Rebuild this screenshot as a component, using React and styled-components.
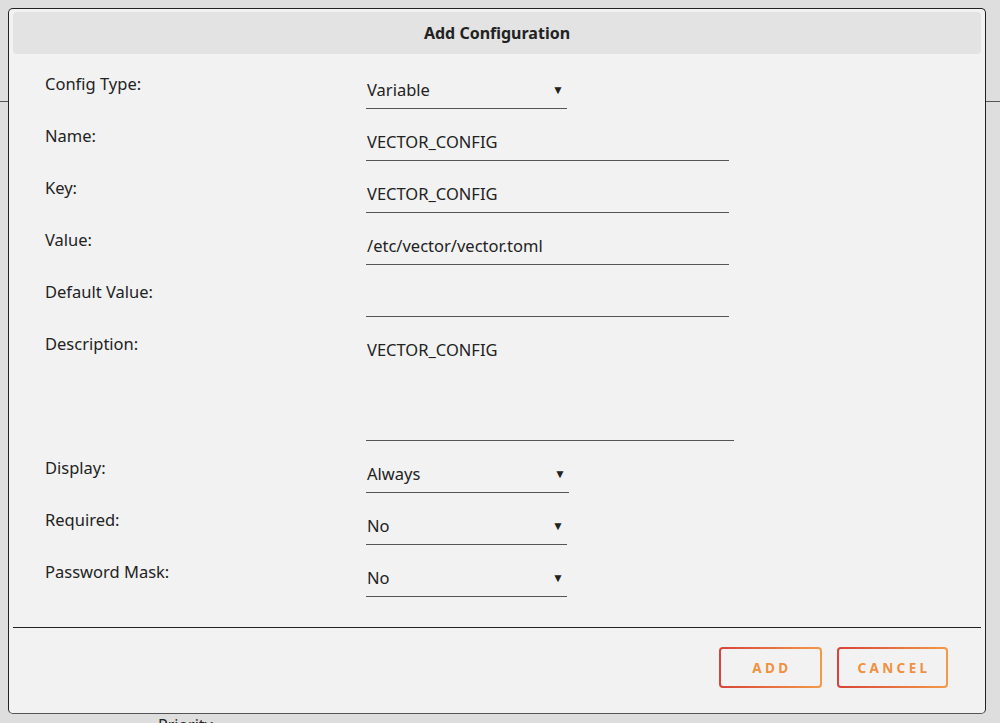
import React from "react";
import styled, { createGlobalStyle } from "styled-components";

const GlobalStyle = createGlobalStyle`
  html, body {
    margin: 0;
    padding: 0;
    background: #dedede;
    font-family: "Noto Sans", "Open Sans", sans-serif;
    color: #222;
    overflow: hidden;
  }
`;

const fields = [
  { label: "Config Type:", value: "Variable", kind: "select" },
  { label: "Name:", value: "VECTOR_CONFIG", kind: "text" },
  { label: "Key:", value: "VECTOR_CONFIG", kind: "text" },
  { label: "Value:", value: "/etc/vector/vector.toml", kind: "text" },
  { label: "Default Value:", value: "", kind: "text" },
  { label: "Description:", value: "VECTOR_CONFIG", kind: "area" },
  { label: "Display:", value: "Always", kind: "select", wide: true },
  { label: "Required:", value: "No", kind: "select" },
  { label: "Password Mask:", value: "No", kind: "select" },
];

const App = () => {
  return (
    <>
      <GlobalStyle />
      <Page>
        <PageTop />
        <PageText>Priority</PageText>
      </Page>
      <Modal>
        <ModalHeader>Add Configuration</ModalHeader>
        <Form>
          {fields.map((f, i) => (
            <Row key={i}>
              <Label>{f.label}</Label>
              {f.kind === "select" && (
                <Select $wide={f.wide}>
                  <span>{f.value}</span>
                  <Caret>▼</Caret>
                </Select>
              )}
              {f.kind === "text" && <TextInput>{f.value}</TextInput>}
              {f.kind === "area" && <TextArea>{f.value}</TextArea>}
            </Row>
          ))}
        </Form>
        <Footer>
          <OutlineButton $width={103}>Add</OutlineButton>
          <OutlineButton $width={111}>Cancel</OutlineButton>
        </Footer>
      </Modal>
    </>
  );
};

export default App;

const Page = styled.div`
  height: 723px;
  overflow: hidden;
  display: flex;
  flex-direction: column;
`;

const PageTop = styled.div`
  flex-shrink: 0;
  height: 101px;
  border-bottom: 1px solid #555;
`;

const PageText = styled.div`
  flex-shrink: 0;
  margin-top: 612px;
  padding-left: 158px;
  font-size: 16px;
  color: #222;
`;

const Modal = styled.div`
  position: fixed;
  top: 8px;
  left: 8px;
  width: 978px;
  height: 706px;
  box-sizing: border-box;
  padding: 3px 4px 0;
  background: #f2f2f2;
  border: 1px solid #222;
  border-bottom-color: #555;
  border-radius: 5px;
  display: flex;
  flex-direction: column;
`;

const ModalHeader = styled.div`
  height: 42px;
  background: #e3e3e3;
  border-radius: 4px;
  display: flex;
  align-items: center;
  justify-content: center;
  font-size: 16px;
  font-weight: 700;
  color: #222;
`;

const Form = styled.div`
  display: flex;
  flex-direction: column;
  gap: 17px;
  padding: 20px 0 0 32px;
  height: 574px;
  box-sizing: border-box;
  border-bottom: 1px solid #222;
`;

const Row = styled.div`
  display: grid;
  grid-template-columns: 321px auto;
  align-items: start;
`;

const Label = styled.div`
  font-size: 16.5px;
  line-height: 20px;
  color: #222;
`;

const Field = styled.div`
  box-sizing: border-box;
  padding: 6px 1px 0;
  font-size: 16.5px;
  line-height: 20px;
  color: #222;
  border-bottom: 1px solid #555;
`;

const Select = styled(Field)`
  width: ${(p) => (p.$wide ? "203px" : "201px")};
  height: 35px;
  display: flex;
  justify-content: space-between;
`;

const Caret = styled.span`
  font-size: 12px;
  padding-right: 2px;
`;

const TextInput = styled(Field)`
  width: 363px;
  height: 35px;
`;

const TextArea = styled(Field)`
  width: 368px;
  height: 107px;
`;

const Footer = styled.div`
  display: flex;
  justify-content: flex-end;
  gap: 15px;
  padding: 19px 33px 0 0;
`;

const OutlineButton = styled.button`
  width: ${(p) => p.$width}px;
  height: 41px;
  padding: 1px 0 0 3px;
  box-sizing: border-box;
  border: 2px solid transparent;
  border-radius: 4px;
  background: linear-gradient(#f2f2f2, #f2f2f2) padding-box,
    linear-gradient(90deg, #d8433a, #f49a46) border-box;
  color: #ef9140;
  font-family: "Noto Sans", "Open Sans", sans-serif;
  font-size: 13.5px;
  font-weight: 700;
  letter-spacing: 3.4px;
  text-transform: uppercase;
  cursor: pointer;
`;
